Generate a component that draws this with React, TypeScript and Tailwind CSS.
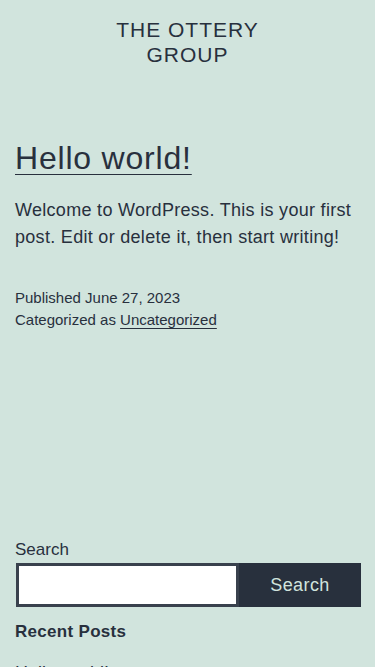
export default function App() {
  return (
    <div
      className="min-h-[667px] bg-[#d1e4dd] text-[#28303d] px-[15px]"
      style={{ fontFamily: '"Liberation Sans", Arial, sans-serif' }}
    >
      {/* Site title */}
      <header className="pt-[17px] text-center">
        <h1 className="mx-auto w-[170px] text-[21px] leading-[25px] tracking-[1px] uppercase">
          The Ottery Group
        </h1>
      </header>

      {/* Post */}
      <article className="mt-[71px]">
        <h2 className="text-[32px] leading-[40px] tracking-[0.8px]">
          <a href="#" className="underline decoration-1 underline-offset-[5px]">
            Hello world!
          </a>
        </h2>
        <p className="mt-[19px] text-[18px] leading-[27px] tracking-[0.3px]">
          Welcome to WordPress. This is your first post. Edit or delete it, then start writing!
        </p>
        <div className="mt-[36px] text-[15px] leading-[22px]">
          <div>Published June 27, 2023</div>
          <div>
            Categorized as{" "}
            <a href="#" className="underline decoration-1 underline-offset-[3px]">
              Uncategorized
            </a>
          </div>
        </div>
      </article>

      {/* Widgets */}
      <aside className="mt-[209px]">
        <label className="block text-[17px] leading-[20px]">Search</label>
        <form className="mt-[3px] flex h-[44px] ml-[1px] w-[345px]">
          <input
            type="text"
            className="flex-1 min-w-0 bg-white border-[3px] border-[#39414d] outline-none"
          />
          <button
            type="button"
            className="w-[122px] bg-[#28303d] text-[#d1e4dd] text-[18px] tracking-[0.4px]"
          >
            Search
          </button>
        </form>
        <h2 className="mt-[15px] text-[17px] leading-[20px] font-bold tracking-[0.3px]">
          Recent Posts
        </h2>
        <ul className="mt-[18px]">
          <li className="text-[18px] leading-[27px]">
            <a href="#">Hello world!</a>
          </li>
        </ul>
      </aside>
    </div>
  );
}
